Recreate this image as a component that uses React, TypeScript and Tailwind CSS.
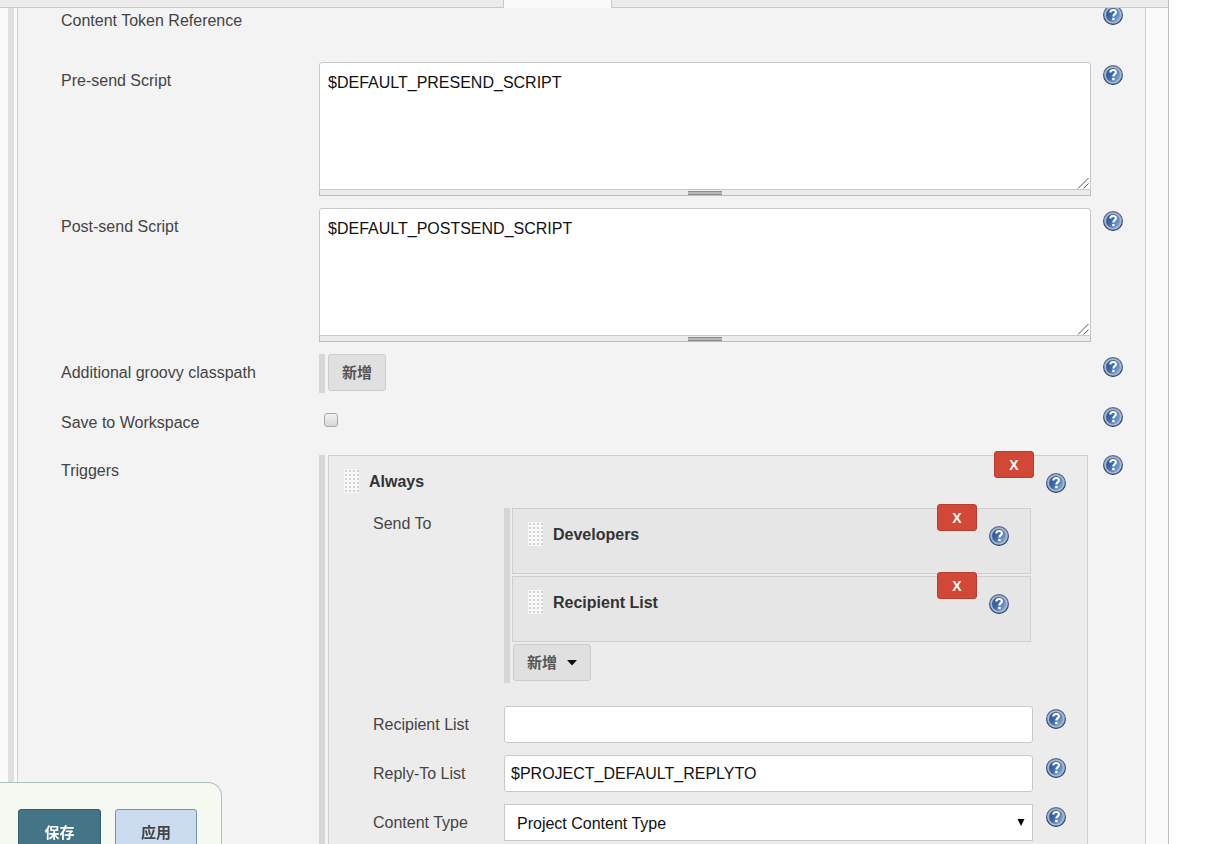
import type { ReactNode } from "react";

function HelpLink({ topic }: { topic: string }) {
  return (
    <a href="#help" aria-label={`Help for feature: ${topic}`} className="block size-5 shrink-0">
      <svg viewBox="0 0 20 20" className="block size-5" aria-hidden="true">
        <defs>
          <linearGradient id="helpDisc" x1="0" y1="0" x2="1" y2="0.6">
            <stop offset="0" stopColor="#28508f" />
            <stop offset="0.5" stopColor="#3d69a6" />
            <stop offset="1" stopColor="#7ba3d0" />
          </linearGradient>
          <linearGradient id="helpRim" x1="0" y1="0" x2="0" y2="1">
            <stop offset="0" stopColor="#5b6f92" />
            <stop offset="1" stopColor="#1f3a63" />
          </linearGradient>
        </defs>
        <circle cx="10" cy="10" r="9.4" fill="#a9b8d0" stroke="url(#helpRim)" strokeWidth="1.2" />
        <circle cx="10" cy="10" r="7" fill="url(#helpDisc)" />
        <path
          d="M7.3 7.6C7.3 5.8 8.6 5 10.1 5c1.6 0 2.8.9 2.8 2.3 0 1.9-2.5 1.9-2.5 4.1"
          fill="none"
          stroke="#fff"
          strokeWidth="2.2"
        />
        <rect x="9.2" y="12.9" width="2.4" height="2.3" fill="#fff" />
      </svg>
    </a>
  );
}

function Grip() {
  return (
    <svg width="15" height="24" className="block shrink-0" aria-hidden="true">
      <defs>
        <pattern id="gripDots" width="4" height="4" patternUnits="userSpaceOnUse">
          <rect width="4" height="4" fill="#f8f8f8" />
          <rect x="1" y="1" width="2" height="2" fill="#d2d2d2" />
        </pattern>
      </defs>
      <rect width="15" height="24" fill="url(#gripDots)" />
    </svg>
  );
}

function Row({
  label,
  htmlFor,
  className,
  children,
}: {
  label: string;
  htmlFor?: string;
  className: string;
  children?: ReactNode;
}) {
  return (
    <div className={`flex items-start pr-[22px] pl-[43px] ${className}`}>
      <label htmlFor={htmlFor} className="w-[258px] shrink-0 pt-[9px] leading-5">
        {label}
      </label>
      <div className="min-w-0 flex-1">{children}</div>
      <div className="ml-3 pt-[3px]">
        <HelpLink topic={label} />
      </div>
    </div>
  );
}

function InnerRow({
  label,
  htmlFor,
  className,
  children,
}: {
  label: string;
  htmlFor: string;
  className: string;
  children: ReactNode;
}) {
  return (
    <div className={`flex items-start pr-[21px] pl-11 ${className}`}>
      <label htmlFor={htmlFor} className="w-[131px] shrink-0 pt-[9px] leading-5">
        {label}
      </label>
      <div className="min-w-0 flex-1">{children}</div>
      <div className="ml-[13px] pt-[3px]">
        <HelpLink topic={label} />
      </div>
    </div>
  );
}

function ScriptBox({ id, value }: { id: string; value: string }) {
  return (
    <div>
      <div className="relative">
        <textarea
          id={id}
          defaultValue={value}
          className="block h-32 w-full resize-none rounded-t-[3px] border border-[#c8c8c8] bg-white px-2 py-2 leading-6 text-[#111] outline-none"
        />
        <svg
          width="12"
          height="12"
          className="pointer-events-none absolute right-0.5 bottom-px"
          aria-hidden="true"
        >
          <path d="M1 11.5 11.5 1M6.5 11.5l5-5" fill="none" stroke="#555" strokeWidth="1" />
        </svg>
      </div>
      <div className="flex h-1.5 justify-center border border-t-0 border-[#bcbcbc] bg-[#ececec]">
        <div className="mt-px h-1 w-[34px] border-y border-[#8c8c8c] bg-[#b8b8b8]" />
      </div>
    </div>
  );
}

function Chunk({
  title,
  className,
  children,
}: {
  title: string;
  className: string;
  children?: ReactNode;
}) {
  return (
    <section className={`relative border border-[#cfcfcf] ${className}`}>
      <header className="flex items-start gap-2.5 pt-[13px] pl-[15px]">
        <Grip />
        <b className="leading-[26px] text-[#333]">{title}</b>
      </header>
      <button
        type="button"
        aria-label={`Delete ${title}`}
        className="absolute -top-[5px] right-[53px] h-[27px] w-10 rounded-[3px] border border-[#b93d30] bg-[#d14836] text-sm leading-none font-bold text-white"
      >
        X
      </button>
      <div className="absolute top-[17px] right-[21px]">
        <HelpLink topic={title} />
      </div>
      {children}
    </section>
  );
}

const ADD_BUTTON =
  "flex h-[37px] items-center rounded-[3px] border border-[#cdcdcd] bg-[#e0e0e0] px-[13px] text-[15px] leading-none font-bold text-[#555]";

const FIELD =
  "block h-[37px] w-full border border-[#c8c8c8] bg-white leading-5 text-[#111] outline-none";

export default function App() {
  return (
    <div className="h-screen overflow-hidden bg-white pr-[38px] font-['Liberation_Sans','Noto_Sans_CJK_SC',sans-serif] text-base text-[#444]">
      <div className="flex h-full flex-col border-r border-[#bdbdbd] bg-[#fafafa]">
        <nav className="flex h-2 shrink-0" aria-label="Sections">
          <div className="w-[503px] border-b border-[#c9c9c9] bg-[#ececec]" />
          <div className="w-[109px] border-x border-[#c9c9c9] bg-[#fafafa]" />
          <div className="flex-1 border-b border-[#c9c9c9] bg-[#ececec]" />
        </nav>

        <main className="flex min-h-0 flex-1 overflow-hidden pr-[22px] pl-2">
          <div className="w-1.5 shrink-0 bg-[#e0e0e0]" />
          <div className="ml-[3px] min-w-0 flex-1 border-x border-[#d0d0d0] bg-[#f3f3f3]">
            <div className="-mt-1.5">
              <Row label="Content Token Reference" className="h-[60px]" />
              <Row label="Pre-send Script" htmlFor="presend" className="h-[146px]">
                <ScriptBox id="presend" value="$DEFAULT_PRESEND_SCRIPT" />
              </Row>
              <Row label="Post-send Script" htmlFor="postsend" className="h-[146px]">
                <ScriptBox id="postsend" value="$DEFAULT_POSTSEND_SCRIPT" />
              </Row>
              <Row label="Additional groovy classpath" htmlFor="classpath" className="h-[50px]">
                <div className="flex h-[39px] border-l-6 border-[#d6d6d6] pl-[3px]">
                  <button id="classpath" type="button" className={ADD_BUTTON}>
                    新增
                  </button>
                </div>
              </Row>
              <Row label="Save to Workspace" htmlFor="workspace" className="h-12">
                <input
                  id="workspace"
                  type="checkbox"
                  className="mt-[9px] ml-[5px] block size-3.5 appearance-none rounded-[3px] border border-[#a8a8a8] bg-linear-to-b from-[#f0f0f0] to-[#d8d8d8] checked:bg-[#777]"
                />
              </Row>
              <Row label="Triggers" className="">
                <div className="mt-[3px] border-l-6 border-[#d6d6d6] px-[3px]">
                  <Chunk title="Always" className="bg-[#ececec] pb-24">
                    <div className="mt-2.5">
                      <div className="flex h-[201px] items-start pr-14 pl-11">
                        <div className="w-[131px] shrink-0 pt-[9px] leading-5">Send To</div>
                        <div className="mt-[3px] flex min-w-0 flex-1 flex-col gap-0.5 border-l-6 border-[#d6d6d6] pb-0.5 pl-0.5">
                          <Chunk title="Developers" className="h-[66px] bg-[#e6e6e6]" />
                          <Chunk title="Recipient List" className="h-[66px] bg-[#e6e6e6]" />
                          <div className="flex pl-px">
                            <button type="button" className={ADD_BUTTON}>
                              新增
                              <svg width="10" height="6" className="ml-2.5" aria-hidden="true">
                                <path d="M0 0h10L5 5.5z" fill="#111" />
                              </svg>
                            </button>
                          </div>
                        </div>
                      </div>
                      <InnerRow label="Recipient List" htmlFor="recipients" className="h-[49px]">
                        <input
                          id="recipients"
                          type="text"
                          className={`${FIELD} rounded-[3px] px-1.5`}
                        />
                      </InnerRow>
                      <InnerRow label="Reply-To List" htmlFor="replyto" className="h-[49px]">
                        <input
                          id="replyto"
                          type="text"
                          defaultValue="$PROJECT_DEFAULT_REPLYTO"
                          className={`${FIELD} rounded-[3px] px-1.5`}
                        />
                      </InnerRow>
                      <InnerRow label="Content Type" htmlFor="contenttype" className="h-[49px]">
                        <div className="relative">
                          <select
                            id="contenttype"
                            className={`${FIELD} appearance-none pt-0.5 pr-8 pl-3`}
                          >
                            <option>Project Content Type</option>
                          </select>
                          <svg
                            width="8"
                            height="7"
                            className="pointer-events-none absolute top-[15px] right-2"
                            aria-hidden="true"
                          >
                            <path d="M0.5 0h7L4 7z" fill="#000" />
                          </svg>
                        </div>
                      </InnerRow>
                    </div>
                  </Chunk>
                </div>
              </Row>
            </div>
          </div>
        </main>
      </div>

      <div className="fixed bottom-0 left-0 flex h-[62px] items-start gap-3.5 overflow-hidden rounded-tr-[14px] border-t border-r border-[#a9c4bb] bg-[#f5f8f1]/95 pt-[26px] pr-6 pl-[18px] text-[15px] font-bold">
        <button
          type="button"
          className="h-12 w-[83px] shrink-0 rounded-[3px] border border-[#335f6e] bg-[#437586] text-white"
        >
          保存
        </button>
        <button
          type="button"
          className="h-12 w-[82px] shrink-0 rounded-[3px] border border-[#7295ad] bg-[#cbdcee] text-[#444]"
        >
          应用
        </button>
      </div>
    </div>
  );
}
